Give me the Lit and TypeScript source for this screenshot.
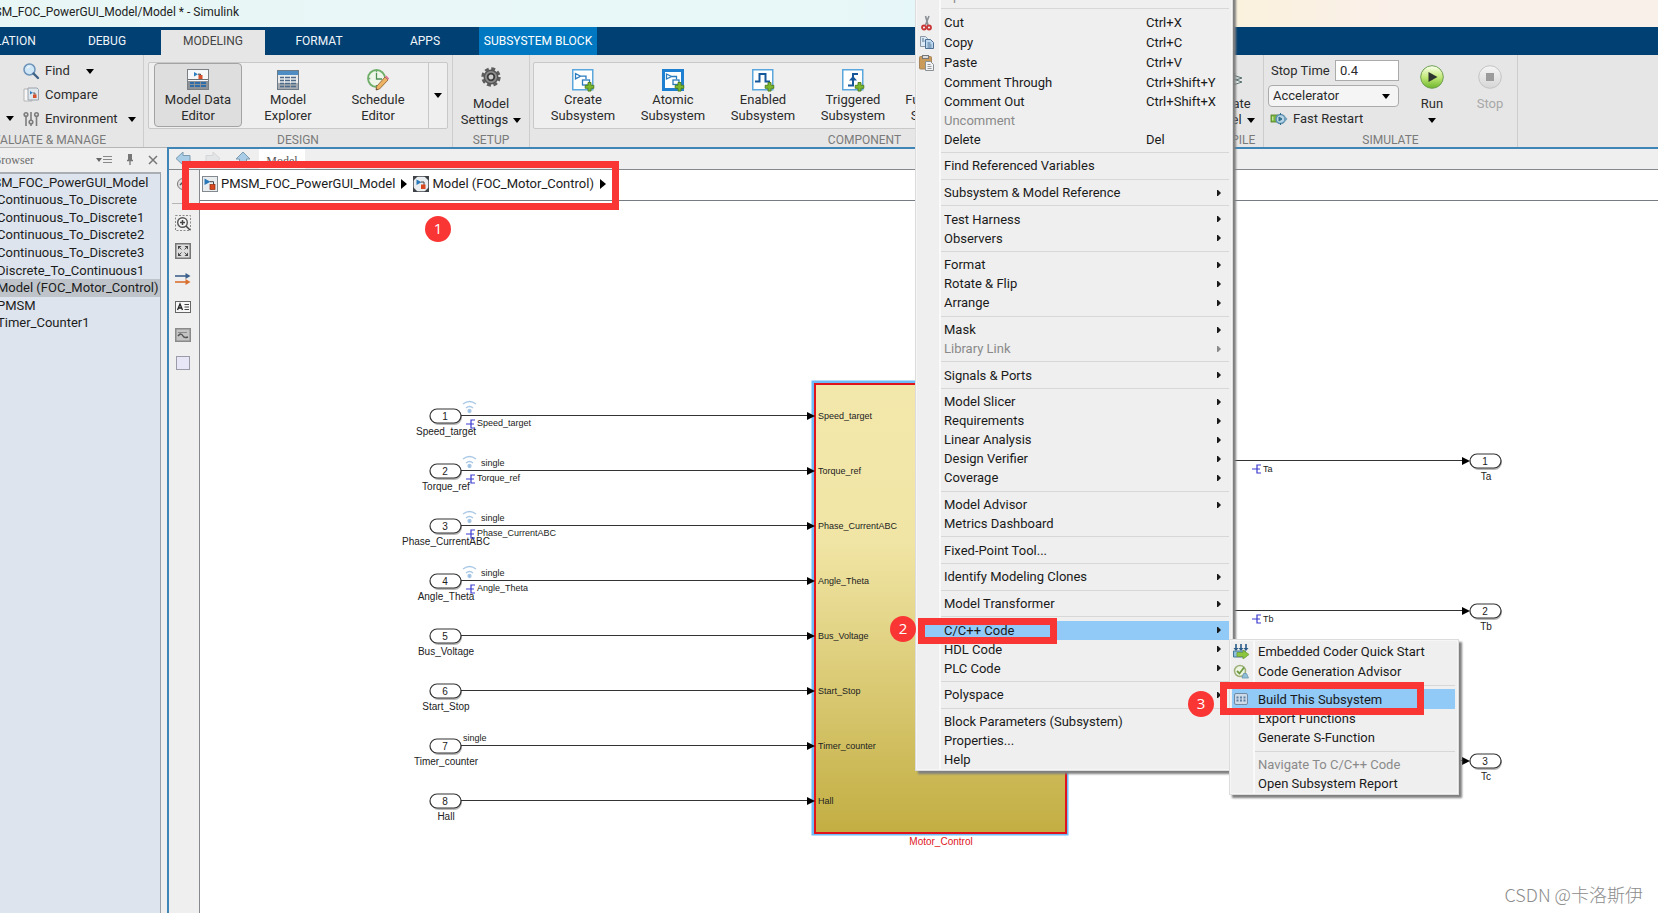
import { LitElement, html, svg, css, nothing, TemplateResult, SVGTemplateResult } from "lit";
import { customElement, state } from "lit/decorators.js";
import { classMap } from "lit/directives/class-map.js";

interface MenuEntry {
  label?: string;
  keys?: string;
  sub?: boolean;
  disabled?: boolean;
  active?: boolean;
  icon?: string;
  sep?: boolean;
}

const SEP: MenuEntry = { sep: true };

const CONTEXT_MENU: MenuEntry[] = [
  { label: "Open In New Window", disabled: true },
  SEP,
  { label: "Cut", keys: "Ctrl+X", icon: "cut" },
  { label: "Copy", keys: "Ctrl+C", icon: "copy" },
  { label: "Paste", keys: "Ctrl+V", icon: "paste" },
  { label: "Comment Through", keys: "Ctrl+Shift+Y" },
  { label: "Comment Out", keys: "Ctrl+Shift+X" },
  { label: "Uncomment", disabled: true },
  { label: "Delete", keys: "Del" },
  SEP,
  { label: "Find Referenced Variables" },
  SEP,
  { label: "Subsystem & Model Reference", sub: true },
  SEP,
  { label: "Test Harness", sub: true },
  { label: "Observers", sub: true },
  SEP,
  { label: "Format", sub: true },
  { label: "Rotate & Flip", sub: true },
  { label: "Arrange", sub: true },
  SEP,
  { label: "Mask", sub: true },
  { label: "Library Link", sub: true, disabled: true },
  SEP,
  { label: "Signals & Ports", sub: true },
  SEP,
  { label: "Model Slicer", sub: true },
  { label: "Requirements", sub: true },
  { label: "Linear Analysis", sub: true },
  { label: "Design Verifier", sub: true },
  { label: "Coverage", sub: true },
  SEP,
  { label: "Model Advisor", sub: true },
  { label: "Metrics Dashboard" },
  SEP,
  { label: "Fixed-Point Tool..." },
  SEP,
  { label: "Identify Modeling Clones", sub: true },
  SEP,
  { label: "Model Transformer", sub: true },
  SEP,
  { label: "C/C++ Code", sub: true, active: true },
  { label: "HDL Code", sub: true },
  { label: "PLC Code", sub: true },
  SEP,
  { label: "Polyspace", sub: true },
  SEP,
  { label: "Block Parameters (Subsystem)" },
  { label: "Properties..." },
  { label: "Help" },
];

const CODE_MENU: MenuEntry[] = [
  { label: "Embedded Coder Quick Start", icon: "coder" },
  { label: "Code Generation Advisor", icon: "advisor" },
  SEP,
  { label: "Build This Subsystem", icon: "build", active: true },
  { label: "Export Functions" },
  { label: "Generate S-Function" },
  SEP,
  { label: "Navigate To C/C++ Code", disabled: true },
  { label: "Open Subsystem Report" },
];

const plus = svg`<path d="M15 14.5h3v2.8h2.8v3H18v2.8h-3v-2.8h-2.8v-3H15z" transform="translate(1 -1)" fill="#7cb82f" stroke="#4c7a1c" stroke-width=".9"/>`;

const ICONS: Record<string, SVGTemplateResult> = {
  find: svg`<circle cx="6.5" cy="6.5" r="5.5" fill="#cfe6f7" stroke="#6d93b8" stroke-width="1.5"/><path d="M4 5.5a3 3 0 0 1 3-2" stroke="#fff" fill="none"/><path d="M10.5 10.5L15 15" stroke="#3f6187" stroke-width="2.4" stroke-linecap="round"/>`,
  compare: svg`<path d="M1 2h8v12H1z" fill="#f7f7f7" stroke="#b5b5b5"/><path d="M5 1h9l1.5 1.5V13H5z" fill="#dfe6ec" stroke="#9aa3ab"/><path d="M7 4l3 1.8L7 7.500z" fill="#2f7fc0"/><path d="M10 6h2v2" stroke="#444" fill="none" stroke-width=".8"/><rect x="10" y="7.500" width="3.500" height="3.500" fill="#d8502b"/>`,
  environment: svg`<g stroke="#7d7d7d" stroke-width="1.600" fill="#e6e6e6"><path d="M3 4v11M8 1v8M8 13v2M13.500 4v11"/><circle cx="3" cy="3.500" r="1.800"/><circle cx="8" cy="11" r="1.800"/><circle cx="13.500" cy="3.500" r="1.800"/></g>`,
  dataEditor: svg`<rect x=".5" y=".5" width="21" height="20" fill="#f5f7f9" stroke="#7b8085"/><path d="M1 12h20v8H1z" fill="#8c9297"/><path d="M1 10.500h20" stroke="#6b7075"/><path d="M7 3l4 2.200-4 2.300z" fill="#2f7fc0"/><path d="M11 5.200h2.500V7" stroke="#333" fill="none"/><rect x="11.500" y="6" width="4" height="4" fill="#d8502b"/><path d="M3 14h4m1 0h5m1 0h5M3 17h4m1 0h5m1 0h5" stroke="#2f6da8" stroke-width="2"/>`,
  explorer: svg`<rect x=".5" y="1.500" width="21" height="19" fill="#e8eaec" stroke="#6e7a86"/><path d="M1 2h20v4H1z" fill="#4e8cc4"/><path d="M1 14h20v6H1z" fill="#a5abb0"/><path d="M3 8.500h4m1 0h5m1 0h5M3 11.500h4m1 0h5m1 0h5M3 14.500h4m1 0h5m1 0h5M3 17.500h4m1 0h5m1 0h5" stroke="#4d6a88" stroke-width="1.500"/>`,
  schedule: svg`<circle cx="9.500" cy="9.500" r="8.500" fill="#eef6ea" stroke="#6fae68" stroke-width="1.800"/><path d="M9.500 4v6H15M9.500 2.200v1M9.500 16v1M2.200 9.500h1" stroke="#4f8f55" stroke-width="1.300" fill="none"/><path d="M18 8l3 3-8.500 9-3.500 1 .7-3.600z" fill="#edb264" stroke="#94683a" stroke-width=".9"/><path d="M18 7.800l3.200 3 1-1.400-2.800-3z" fill="#e0789a"/><path d="M9 21l.5-1.800 1.300 1.200z" fill="#444"/>`,
  gear: svg`<circle cx="10" cy="10" r="8.400" fill="none" stroke="#5d5d5d" stroke-width="2.600" stroke-dasharray="4 2.600"/><circle cx="10" cy="10" r="6.800" fill="#8b8b8b" stroke="#555" stroke-width="1.500"/><circle cx="10" cy="10" r="3.300" fill="#cfcfcf" stroke="#3d3d3d" stroke-width="1.800"/>`,
  create: svg`<rect x=".75" y=".75" width="20" height="20" fill="#fff" stroke="#5ba7dd" stroke-width="1.500"/><path d="M3.500 4.500l5 2.700-5 2.700zM8.500 7.200h5.500v3" fill="none" stroke="#2b7cbf" stroke-width="1.300"/><rect x="10.500" y="11" width="7" height="5" fill="#fff" stroke="#2b7cbf" stroke-width="1.300"/>${plus}`,
  atomic: svg`<rect x="1.500" y="1.500" width="19" height="19" fill="#fff" stroke="#1f80d2" stroke-width="3"/><path d="M4.500 5l5 2.500-5 2.500zM9.500 7.500h5v3" fill="none" stroke="#2b7cbf" stroke-width="1.300"/><rect x="11" y="11" width="6" height="4.500" fill="#fff" stroke="#2b7cbf" stroke-width="1.300"/>${plus}`,
  enabled: svg`<rect x=".75" y=".75" width="20" height="20" fill="#fff" stroke="#5ba7dd" stroke-width="1.500"/><path d="M3 12.500h4.500V5h6v7.500H18" fill="none" stroke="#17589b" stroke-width="2"/>${plus}`,
  triggered: svg`<rect x=".75" y=".75" width="20" height="20" fill="#fff" stroke="#5ba7dd" stroke-width="1.500"/><path d="M6 16.500h5V5h5" fill="none" stroke="#17589b" stroke-width="2"/><path d="M7 11.500l4-4.500 4 4.500z" fill="#17589b"/>${plus}`,
  update: svg`<path d="M5 12l9-3 9 3-9 3z" fill="#cfd8d8" stroke="#5a7370"/><path d="M5 16l9-3 9 3-9 3z" fill="#e8eded" stroke="#5a7370"/><path d="M9 2h5v5h3l-5.500 4L6 7h3z" fill="#6aa63b"/>`,
  restart: svg`<rect x="0" y="4" width="7" height="7" fill="#7cb73a" stroke="#4d7b25" stroke-width=".8"/><path d="M1.800 5.500v4" stroke="#e3f2cf"/><circle cx="9.500" cy="8" r="4.500" fill="#b5d3e4" stroke="#5a8fb0" stroke-width="1.500"/><path d="M8 6l3 2-3 2zM9.500 2v2M9.500 12v2" fill="#34708e" stroke="#34708e"/><path d="M13 4.500l3.500 3.500-3.500 3.500z" fill="#6f9fba"/>`,
  run: svg`<defs><linearGradient id="rg" x2="0" y2="1"><stop offset="0" stop-color="#fbfff0"/><stop offset=".5" stop-color="#c4ea7a"/><stop offset="1" stop-color="#6cb52a"/></linearGradient></defs><circle cx="12" cy="12" r="11.300" fill="url(#rg)" stroke="#6f9f52"/><path d="M8.500 7l9 5-9 5z" fill="#2e3430"/>`,
  stop: svg`<defs><linearGradient id="sg" x2="0" y2="1"><stop offset="0" stop-color="#f5f5f5"/><stop offset="1" stop-color="#d6d6d6"/></linearGradient></defs><circle cx="12" cy="12" r="11.300" fill="url(#sg)" stroke="#c4c4c4"/><rect x="8" y="8" width="8" height="8" fill="#9b9b9b"/>`,
  back: svg`<path d="M1 7.500L8 1v3.500h7v6H8V14z" fill="#a9cde6" stroke="#7d9bb0"/>`,
  forward: svg`<path d="M15 7.500L8 1v3.500H1v6h7V14z" fill="#e3e5e6" stroke="#d3d6d8"/>`,
  up: svg`<path d="M8 1l7 7h-3.500v6h-7V8H1z" fill="#a9cde6" stroke="#7d9bb0"/>`,
  model: svg`<rect x=".5" y=".5" width="15" height="15" fill="#e9edf0" stroke="#83898e"/><path d="M2.500 2.500l6 3.200-6 3.200z" fill="#2a77b8"/><path d="M8 5.700h3.500v3" fill="none" stroke="#444"/><rect x="8" y="8.500" width="5" height="5" fill="#d9481f" stroke="#8e2c10" stroke-width=".7"/>`,
  ref: svg`<rect x=".5" y=".5" width="15" height="15" fill="#e9edf0" stroke="#6a6f74"/><path d="M0 0h5L0 5zM16 0v5l-5-5zM0 16v-5l5 5zM16 16h-5l5-5z" fill="#3f4347"/><path d="M3.500 3.500l5 2.700-5 2.700z" fill="#2a77b8"/><path d="M8 6h3v3" fill="none" stroke="#444"/><rect x="8" y="8.500" width="4.500" height="4.500" fill="#d9481f"/>`,
  hide: svg`<circle cx="8" cy="8" r="5.500" fill="#e0e0e0" stroke="#777"/><path d="M5 9l3-3 3 3" stroke="#555" fill="none" stroke-width="1.500"/>`,
  zoomIn: svg`<rect x=".5" y=".5" width="15" height="15" fill="none" stroke="#8a8a8a" stroke-dasharray="2 1.500"/><circle cx="7.500" cy="7.500" r="4.800" fill="#f6f6f6" stroke="#555" stroke-width="1.400"/><path d="M5 7.500h5M7.500 5v5M11 11l4 4" stroke="#444" stroke-width="1.500"/>`,
  fit: svg`<rect x=".75" y=".75" width="14.500" height="14.500" fill="#dcdcdc" stroke="#777" stroke-width="1.500"/><path d="M3 3h3.500L3 6.500zM13 3H9.500L13 6.500zM3 13h3.500L3 9.500zM13 13H9.500L13 9.500z" fill="#444"/><path d="M4 4l2.500 2.500M12 4L9.500 6.500M4 12l2.500-2.500M12 12L9.500 9.500" stroke="#555"/>`,
  signals: svg`<path d="M0 5h12" stroke-width="1.600" stroke="#3d608c"/><path d="M10.500 2l5 3-5 3z" fill="#3d608c"/><path d="M0 11h12" stroke="#d9702f" stroke-width="1.600"/><path d="M10.500 8l5 3-5 3z" fill="#d9702f"/>`,
  note: svg`<rect x=".5" y="2.500" width="15" height="11" fill="#f7f7f7" stroke="#666"/><path d="M2.500 11L5 5l2.500 6M3.500 9h3" stroke="#222" fill="none" stroke-width="1.300"/><path d="M9.500 5.500H14M9.500 8H14M9.500 10.500H14" stroke="#444"/>`,
  image: svg`<rect x=".75" y="1.750" width="14.500" height="12.500" fill="#c4c4c4" stroke="#8a8a8a" stroke-width="1.500"/><path d="M3 5.500h9" stroke="#8a8a8a"/><path d="M3 9c2.500-3 4-2 5 0s2.500 2 5 1" fill="none" stroke="#555" stroke-width="1.500"/>`,
  area: svg`<rect x="1.500" y="1.500" width="13" height="13" fill="#e6e6f7" stroke="#9a9aa8"/>`,
  cut: svg`<path d="M10 1L6.500 10M6.500 1L9 10" stroke="#8a8f94" stroke-width="1.600"/><circle cx="5" cy="12.500" r="2" fill="none" stroke="#c93636" stroke-width="1.800"/><circle cx="10" cy="12.500" r="2" fill="none" stroke="#c93636" stroke-width="1.800"/>`,
  copy: svg`<path d="M1.500 1.500h5l2 2v8h-7z" fill="#dce9f4" stroke="#8a98a5"/><path d="M6.500 4.500h5l3 3v6h-8z" fill="#bcd7ef" stroke="#4c6f93"/><path d="M8.500 8h3M8.500 10h4M8.500 12h4M3 4h2M3 6h2.500" stroke="#4c6f93"/>`,
  paste: svg`<rect x=".5" y="1.500" width="12" height="12.500" rx="1" fill="#c99a58" stroke="#a8845a"/><rect x="3.500" y=".5" width="6" height="3" fill="#ddd" stroke="#777"/><path d="M6.500 6.500h5l3 3v6h-8z" fill="#f1f3f5" stroke="#8b9094"/><path d="M8.500 9.500h3M8.500 11.500h4M8.500 13.500h4" stroke="#999"/>`,
  coder: svg`<path d="M3 1v6M8 1v6M13 1v6" stroke="#2c5c88" stroke-width="1.600"/><path d="M.5 5h5L3 8zM5.500 5h5L8 8zM10.500 5h5L13 8z" fill="#2c5c88"/><path d="M.5 8h12v6H.5z" fill="#8fc0da" stroke="#3f7796"/><path d="M4 9.500h6V7l6 4.500-6 4.500v-2.500H4z" fill="#8cc63e" stroke="#6d9d3a" stroke-width=".8"/>`,
  advisor: svg`<circle cx="7" cy="8" r="5.500" fill="#eef5e2" stroke="#9db07a" stroke-width="1.500"/><path d="M4 8l2.500 2.500L11 4.500" stroke="#6e9a45" stroke-width="1.800" fill="none"/><path d="M9 15l1.500-4.500h3L15.500 15z" fill="#8fc0da" stroke="#6c93ae" stroke-width=".8"/>`,
  build: svg`<rect x="1.500" y="2.500" width="13" height="11" rx="1.500" fill="#cddae8" stroke="#7289a3"/><path d="M3.500 6.500h2m1.500 0h2m1.500 0h2M3.500 9.500h2m1.500 0h2m1.500 0h2" stroke="#5f7fa5" stroke-width="1.800"/>`,
  listMenu: svg`<path d="M0 4h6L3 8z" fill="#666"/><path d="M7 2.500h9M7 5.500h9M7 8.500h9" stroke="#888"/>`,
  pin: svg`<path d="M3 1h4v6H3z" fill="#777"/><path d="M2 7.500h6M5 8v4" stroke="#777" stroke-width="1.300"/>`,
  close: svg`<path d="M1 1l8 8M9 1L1 9" stroke="#777" stroke-width="1.500"/>`,
};

const icon = (name: string, w = 16, h = w) =>
  html`<svg class="icon" width=${w} height=${h} aria-hidden="true">${ICONS[name]}</svg>`;

const caret = html`<svg class="icon" width="8" height="5" aria-hidden="true"><path d="M0 0h8L4 5z" fill="#000" /></svg>`;

@customElement("popup-menu")
export class PopupMenu extends LitElement {
  static properties = { entries: { attribute: false } };
  entries: MenuEntry[] = [];

  static styles = css`
    :host {
      display: flex;
      flex-direction: column;
      box-sizing: border-box;
      padding: 1px 3px 1px 2px;
      background: linear-gradient(90deg, #efefef 23px, #f9f9f9 23px, #f9f9f9 25px, #efefef 25px);
      border: 1px solid #dcdcdc;
      outline: 1px solid #f6f6f6;
      outline-offset: -2px;
      box-shadow: 3px 3px 2px #808080;
      font: 13px/19px Roboto, "Open Sans", sans-serif;
      color: #1a1a1a;
    }
    .entry {
      display: grid;
      grid-template-columns: 26px 202px 1fr 12px;
      align-items: center;
      height: 19px;
      flex: none;
      padding: 0;
      border: 0;
      background: none;
      font: inherit;
      color: inherit;
      text-align: left;
      white-space: nowrap;
    }
    .entry.tall {
      height: 20px;
    }
    .entry.active {
      background: #91c9f7;
    }
    .entry:disabled {
      color: #8a8a8a;
    }
    .icon,
    .arrow {
      display: block;
    }
    .icon {
      margin-left: 1px;
    }
    .sep {
      flex: 1 0 7px;
      display: flex;
      align-items: center;
      padding-left: 23px;
    }
    .sep::before {
      content: "";
      flex: 1;
      height: 1px;
      background: #d7d7d7;
    }
  `;

  render() {
    return this.entries.map((e) =>
      e.sep
        ? html`<div class="sep" role="separator"></div>`
        : html`<button
            class=${classMap({ entry: true, active: !!e.active, tall: !!e.icon })}
            role="menuitem"
            ?disabled=${!!e.disabled}
          >
            <span>${e.icon ? icon(e.icon) : nothing}</span>
            <span>${e.label}</span>
            <span>${e.keys ?? nothing}</span>
            <span
              >${e.sub
                ? html`<svg class="arrow" width="4" height="6" aria-hidden="true">
                    <path d="M0 0h1l3 3-3 3H0z" fill="currentColor" />
                  </svg>`
                : nothing}</span
            >
          </button>`
    );
  }
}

interface Port {
  name: string;
  streamed?: boolean;
  typeX?: number;
}

const INPORTS: Port[] = [
  { name: "Speed_target", streamed: true },
  { name: "Torque_ref", streamed: true, typeX: 481 },
  { name: "Phase_CurrentABC", streamed: true, typeX: 481 },
  { name: "Angle_Theta", streamed: true, typeX: 481 },
  { name: "Bus_Voltage" },
  { name: "Start_Stop" },
  { name: "Timer_counter", typeX: 463 },
  { name: "Hall" },
];

@customElement("block-diagram")
export class BlockDiagram extends LitElement {
  static styles = css`
    :host {
      display: block;
      background: #fff;
    }
    svg {
      display: block;
      width: 100%;
      height: 100%;
      font-family: "Liberation Sans", Arial, sans-serif;
    }
    .name {
      font-size: 10px;
      text-anchor: middle;
      fill: #222;
    }
    .small {
      font-size: 9px;
      fill: #222;
    }
    .block-name {
      font-size: 10px;
      text-anchor: middle;
      fill: #e0141c;
    }
  `;

  private port(x: number, y: number, n: number, name: string) {
    return svg`
      <rect x=${x + 1} y=${y - 6} width="31" height="15" rx="7.5" fill="#000" opacity=".28" />
      <rect x=${x} y=${y - 7} width="31" height="14" rx="7" fill="#fff" stroke="#333" stroke-width="1.2" />
      <text class="name" x=${x + 15} y=${y + 4}>${n}</text>
      <text class="name" x=${x + 16} y=${y + 19}>${name}</text>`;
  }

  private fork(x: number, y: number) {
    return svg`<path d="M${x} ${y}h5M${x + 9} ${y - 4}h-4v8h4M${x + 5} ${y}h3" fill="none" stroke="#3a3ad0" stroke-width="1.2" />`;
  }

  private wire(x1: number, x2: number, y: number) {
    return svg`<path d="M${x1} ${y - 0.5}H${x2 - 6}" stroke="#333" /><path d="M${x2 - 7} ${y - 4}l8 4-8 4z" fill="#000" />`;
  }

  render() {
    return html`<svg role="img" aria-label="Model (FOC_Motor_Control) block diagram">
      <defs>
        <linearGradient id="fill" x1="0" y1="0" x2="0" y2="1">
          <stop offset="0" stop-color="#f3e8ab" />
          <stop offset="0.35" stop-color="#f1e5a5" />
          <stop offset="1" stop-color="#c2ae42" />
        </linearGradient>
      </defs>
      <g transform="translate(-200 -201)">
        <rect x="813" y="382" width="254" height="452" fill="none" stroke="#6cbcf8" stroke-width="3" />
        <rect x="815" y="384" width="251" height="449" fill="url(#fill)" stroke="#e0141a" stroke-width="2" />
        ${INPORTS.map((p, i) => {
          const y = 416 + i * 55;
          return svg`
            ${this.wire(461, 814, y)}
            ${this.port(430, y, i + 1, p.name)}
            <text class="small" x="818" y=${y + 3}>${p.name}</text>
            ${p.streamed
              ? svg`<g fill="none" stroke="#a9c8e6" stroke-width="1.3">
                    <path d="M463 ${y - 12}q6.500 -5 13 0M466 ${y - 8}q3.500 -3 7 0" />
                    <circle cx="469.500" cy=${y - 5} r="1.500" fill="#8fb9e0" />
                  </g>
                  ${this.fork(466, y + 8)}
                  <text class="small" x="477" y=${y + 10}>${p.name}</text>`
              : nothing}
            ${p.typeX ? svg`<text class="small" x=${p.typeX} y=${y - 5}>single</text>` : nothing}`;
        })}
        ${["Ta", "Tb", "Tc"].map((name, i) => {
          const y = 461 + i * 150;
          return svg`
            ${this.wire(1068, 1469, y)}
            ${this.port(1470, y, i + 1, name)}
            ${this.fork(1252, y + 8)}
            <text class="small" x="1263" y=${y + 11}>${name}</text>`;
        })}
        <text class="block-name" x="941" y="845">Motor_Control</text>
      </g>
    </svg>`;
  }
}

@customElement("app-root")
export class AppRoot extends LitElement {
  @state() private tab = "MODELING";

  static styles = css`
    :host {
      display: flex;
      flex-direction: column;
      position: relative;
      height: 100vh;
      overflow: hidden;
      background: #efefef;
      font: 13px/16px Roboto, "Open Sans", sans-serif;
      color: #2b2b2b;
    }
    button {
      padding: 0;
      border: 0;
      background: none;
      font: inherit;
      color: inherit;
      white-space: nowrap;
    }
    .icon {
      display: block;
      flex: none;
      overflow: visible;
    }
    .titlebar {
      flex: none;
      height: 27px;
      line-height: 24px;
      font-size: 12px;
      color: #222;
      background: linear-gradient(90deg, #e8f7f6 0%, #e8f7f7 50%, #e4f6fb 58%, #faf2dc 74%, #faf0ea 84%, #faf0ea 100%);
      display: flex;
      overflow: hidden;
    }
    .titlebar span {
      display: flex;
      justify-content: flex-end;
      width: 239px;
      white-space: nowrap;
    }
    .tabs {
      flex: none;
      display: flex;
      align-items: flex-end;
      gap: 2px;
      height: 28px;
      margin-left: -51px;
      background: #004073;
      font-size: 12px;
    }
    .tabs button {
      width: 104px;
      height: 28px;
      color: #f0f5fa;
    }
    .tabs .current {
      height: 25px;
      padding-bottom: 3px;
      background: #e6e6e6;
      color: #444;
    }
    .tabs .context {
      width: 118px;
      background: #0078c1;
      color: #fff;
    }
    .strip {
      flex: none;
      display: flex;
      height: 92px;
      background: #e6e6e6;
    }
    .section {
      flex: none;
      display: flex;
      flex-direction: column;
      box-sizing: border-box;
      padding-top: 7px;
      border-right: 1px solid #cdcdcd;
    }
    .section h2 {
      margin: 0;
      height: 15px;
      font: 12px/16px Roboto, "Open Sans", sans-serif;
      color: #7a7a7a;
      text-align: center;
      white-space: nowrap;
    }
    .body {
      flex: 1;
      display: flex;
    }
    .evaluate {
      width: 144px;
      padding-top: 4px;
    }
    .evaluate .body {
      justify-content: flex-end;
      padding-right: 8px;
      gap: 9px;
    }
    .evaluate h2 {
      display: flex;
      justify-content: flex-end;
      padding-right: 37px;
    }
    .stack {
      display: flex;
      flex-direction: column;
      width: 112px;
    }
    .stack button {
      display: flex;
      align-items: center;
      justify-content: flex-start;
      gap: 6px;
      height: 24px;
    }
    .stack button .icon:last-child {
      margin-left: 4px;
    }
    .stack .spread .icon:last-child {
      margin-left: 10px;
    }
    .cut-button {
      display: flex;
      align-items: flex-end;
      padding-bottom: 11px;
    }
    .design {
      width: 309px;
      padding-left: 4px;
      padding-right: 4px;
    }
    .gallery {
      flex: 1;
      display: flex;
      gap: 2px;
      box-sizing: border-box;
      height: 67px;
      padding-left: 5px;
      background: #efefef;
      border: 1px solid #c8c8c8;
      border-radius: 2px;
    }
    .tool {
      flex: none;
      display: flex;
      flex-direction: column;
      align-items: center;
      gap: 1px;
      box-sizing: border-box;
      width: 88px;
      height: 64px;
      padding-top: 5px;
      border: 1px solid transparent;
      border-radius: 4px;
      text-align: center;
      white-space: pre-line;
    }
    .tool.pressed {
      background: #dedede;
      border-color: #a3a3a3;
    }
    .gallery .more {
      display: grid;
      place-items: center;
      flex: 1;
      border-left: 1px solid #c8c8c8;
      margin-left: 4px;
    }
    .setup {
      width: 77px;
    }
    .big {
      display: flex;
      flex-direction: column;
      align-items: center;
      flex: 1;
      padding-top: 3px;
    }
    .big .glyph {
      display: grid;
      place-items: center;
      height: 24px;
      margin-bottom: 7px;
    }
    .big .row {
      display: flex;
      align-items: center;
      gap: 5px;
      height: 16px;
    }
    .big:disabled {
      color: #a8a8a8;
    }
    .component {
      width: 667px;
      padding-left: 3px;
    }
    .compile {
      width: 67px;
    }
    .simulate {
      width: 254px;
    }
    .simulate .body {
      margin-top: -2px;
    }
    .form {
      display: flex;
      flex-direction: column;
      gap: 4px;
      width: 131px;
      padding-left: 4px;
      margin-right: 4px;
      flex: none;
    }
    .form .row {
      display: flex;
      align-items: center;
      justify-content: space-between;
      padding-left: 3px;
      height: 21px;
      white-space: nowrap;
    }
    .form .row input {
      box-sizing: border-box;
      width: 64px;
      height: 21px;
      padding: 0 4px;
      border: 1px solid #ababab;
      background: #fff;
      font: inherit;
      color: inherit;
    }
    .form .select {
      display: grid;
      align-items: center;
    }
    .form select,
    .form .select .icon {
      grid-area: 1 / 1;
    }
    .form .select .icon {
      justify-self: end;
      margin-right: 9px;
      pointer-events: none;
    }
    .form select {
      appearance: none;
      box-sizing: border-box;
      height: 22px;
      padding: 0 4px;
      border: 1px solid #ababab;
      border-radius: 4px;
      background: #f5f5f5;
      font: inherit;
      color: inherit;
    }
    .form button {
      display: flex;
      align-items: center;
      gap: 6px;
      padding-left: 3px;
    }
    .simulate .big {
      flex: none;
      width: 58px;
      padding-top: 5px;
    }
    .workspace {
      flex: 1;
      display: flex;
      min-height: 0;
    }
    .browser {
      flex: none;
      display: flex;
      flex-direction: column;
      box-sizing: border-box;
      width: 167px;
      border-top: 1px solid #b5b5b5;
      padding-right: 6px;
    }
    .browser header {
      display: flex;
      align-items: center;
      height: 24px;
      font: 12px/16px "Liberation Serif", serif;
      color: #6b6b6b;
    }
    .browser header .title {
      display: flex;
      justify-content: flex-end;
      width: 34px;
      margin-right: auto;
      white-space: nowrap;
    }
    .browser header .tools {
      display: flex;
      align-items: center;
      gap: 13px;
      padding-right: 3px;
    }
    .tree {
      flex: 1;
      margin: 0;
      background: #dde4ed;
      border-top: 2px solid #a9aeb5;
      border-right: 1px solid #9aa0a8;
      color: #1c1c1c;
    }
    .tree ul {
      display: grid;
      grid-auto-rows: 1fr;
      height: 158px;
      margin: 0;
      padding: 0;
      list-style: none;
    }
    .tree li {
      display: flex;
      align-items: center;
      overflow: hidden;
      white-space: nowrap;
    }
    .tree li.selected {
      background: #bfc4ca;
    }
    .tree .clip {
      margin-left: -3px;
    }
    .tree .root {
      margin-left: -26px;
    }
    .editor {
      flex: 1;
      display: flex;
      flex-direction: column;
      min-width: 0;
      border-top: 2px solid #3f86b6;
      border-left: 2px solid #3f86b6;
    }
    .doc-tabs {
      flex: none;
      display: flex;
      align-items: center;
      height: 20px;
      padding-left: 6px;
      gap: 14px;
      border-bottom: 1px solid #85888d;
    }
    .doc-tabs .doc {
      align-self: stretch;
      box-sizing: border-box;
      width: 46px;
      margin-left: -6px;
      padding-top: 4px;
      background: #fff;
      font: 12px/14px "Liberation Serif", serif;
      color: #555;
    }
    .stage {
      flex: 1;
      display: flex;
      min-height: 0;
    }
    .palette {
      flex: none;
      display: flex;
      flex-direction: column;
      align-items: center;
      gap: 12px;
      box-sizing: border-box;
      width: 31px;
      padding: 6px 2px 0 0;
      border-right: 1px solid #85888d;
    }
    .palette hr {
      width: 22px;
      height: 1px;
      margin: -1px 0;
      border: 0;
      background: #b5b5b5;
    }
    .main {
      flex: 1;
      display: flex;
      flex-direction: column;
      min-width: 0;
    }
    .crumbs {
      flex: none;
      display: flex;
      align-items: center;
      gap: 2px;
      box-sizing: border-box;
      height: 31px;
      padding: 0 2px 2px;
      background: #fff;
      border-bottom: 1px solid #777b82;
      color: #1c1c1c;
    }
    .crumbs a {
      display: flex;
      align-items: center;
      gap: 3px;
      color: inherit;
      text-decoration: none;
      white-space: nowrap;
    }
    .crumbs .next {
      margin: 0 4px;
    }
    block-diagram {
      flex: 1;
      min-height: 0;
    }
    .context-menu,
    .code-menu,
    .frame,
    .badge,
    .watermark {
      position: absolute;
    }
    .context-menu {
      left: 915px;
      top: -16px;
      width: 318px;
      height: 787px;
    }
    .code-menu {
      left: 1229px;
      top: 639px;
      width: 230px;
      height: 156px;
    }
    .frame {
      box-sizing: border-box;
      border: 7px solid #fa3635;
    }
    .frame.path {
      left: 182px;
      top: 161px;
      width: 437px;
      height: 49px;
    }
    .frame.code {
      left: 918px;
      top: 618px;
      width: 139px;
      height: 26px;
    }
    .frame.build {
      left: 1220px;
      top: 682px;
      width: 204px;
      height: 33px;
    }
    .badge {
      width: 26px;
      height: 26px;
      border-radius: 13px;
      background: #fa3635;
      color: #fff;
      font: 15px/24px "Open Sans", "Noto Sans", sans-serif;
      text-align: center;
    }
    .badge.one {
      left: 425px;
      top: 216px;
    }
    .badge.two {
      left: 890px;
      top: 616px;
    }
    .badge.three {
      left: 1188px;
      top: 691px;
    }
    .watermark {
      right: 15px;
      bottom: 7px;
      font: 300 18px/24px "Noto Sans CJK SC", sans-serif;
      color: #8c8c8c;
    }
  `;

  private tool(name: string, label: string, pressed = false): TemplateResult {
    return html`<button class=${classMap({ tool: true, pressed })}>${icon(name, 22)}<span>${label}</span></button>`;
  }

  render() {
    const tabs = ["SIMULATION", "DEBUG", "MODELING", "FORMAT", "APPS", "SUBSYSTEM BLOCK"];
    return html`
      <div class="titlebar"><span>PMSM_FOC_PowerGUI_Model/Model * - Simulink</span></div>
      <nav class="tabs">
        ${tabs.map(
          (t) =>
            html`<button
              class=${classMap({ current: t === this.tab, context: t === "SUBSYSTEM BLOCK" })}
              @click=${() => (this.tab = t)}
            >
              ${t}
            </button>`
        )}
      </nav>
      <div class="strip">
        <section class="section evaluate">
          <div class="body">
            <button class="cut-button" aria-label="More">${caret}</button>
            <div class="stack">
              <button class="spread">${icon("find")}Find${caret}</button>
              <button>${icon("compare")}<span>Compare</span></button>
              <button>${icon("environment")}Environment${caret}</button>
            </div>
          </div>
          <h2>EVALUATE &amp; MANAGE</h2>
        </section>
        <section class="section design">
          <div class="body">
            <div class="gallery">
              ${this.tool("dataEditor", "Model Data\nEditor", true)} ${this.tool("explorer", "Model\nExplorer")}
              ${this.tool("schedule", "Schedule\nEditor")}
              <button class="more" aria-label="More design tools">${caret}</button>
            </div>
          </div>
          <h2>DESIGN</h2>
        </section>
        <section class="section setup">
          <div class="body">
            <button class="big">
              <span class="glyph">${icon("gear", 20)}</span>
              <span class="row">Model</span>
              <span class="row">Settings ${caret}</span>
            </button>
          </div>
          <h2>SETUP</h2>
        </section>
        <section class="section component">
          <div class="body">
            <div class="gallery">
              ${this.tool("create", "Create\nSubsystem")} ${this.tool("atomic", "Atomic\nSubsystem")}
              ${this.tool("enabled", "Enabled\nSubsystem")} ${this.tool("triggered", "Triggered\nSubsystem")}
              ${this.tool("enabled", "Function-Call\nSubsystem")}
            </div>
          </div>
          <h2>COMPONENT</h2>
        </section>
        <section class="section compile">
          <div class="body">
            <button class="big">
              <span class="glyph">${icon("update", 22)}</span>
              <span class="row">Update</span>
              <span class="row">Model ${caret}</span>
            </button>
          </div>
          <h2>COMPILE</h2>
        </section>
        <section class="section simulate">
          <div class="body">
            <div class="form">
              <div class="row">
                <label for="stop-time">Stop Time</label>
                <input id="stop-time" type="text" value="0.4" />
              </div>
              <div class="select">
                <select aria-label="Simulation mode">
                  <option>Accelerator</option>
                  <option>Normal</option>
                </select>
                ${caret}
              </div>
              <button>${icon("restart")}Fast Restart</button>
            </div>
            <button class="big">
              <span class="glyph">${icon("run", 24)}</span>
              <span class="row">Run</span>
              <span class="row">${caret}</span>
            </button>
            <button class="big" disabled>
              <span class="glyph">${icon("stop", 24)}</span>
              <span class="row">Stop</span>
            </button>
          </div>
          <h2>SIMULATE</h2>
        </section>
      </div>
      <div class="workspace">
        <aside class="browser">
          <header>
            <span class="title">Model Browser</span>
            <span class="tools">${icon("listMenu", 16, 12)}${icon("pin", 10, 14)}${icon("close", 10)}</span>
          </header>
          <div class="tree">
            <ul>
              <li><span class="root">PMSM_FOC_PowerGUI_Model</span></li>
              <li><span class="clip">Continuous_To_Discrete</span></li>
              <li><span class="clip">Continuous_To_Discrete1</span></li>
              <li><span class="clip">Continuous_To_Discrete2</span></li>
              <li><span class="clip">Continuous_To_Discrete3</span></li>
              <li><span class="clip">Discrete_To_Continuous1</span></li>
              <li class="selected"><span class="clip">Model (FOC_Motor_Control)</span></li>
              <li><span class="clip">PMSM</span></li>
              <li><span class="clip">Timer_Counter1</span></li>
            </ul>
          </div>
        </aside>
        <main class="editor">
          <div class="doc-tabs">
            ${icon("back")} ${icon("forward")} ${icon("up")}
            <button class="doc">Model</button>
          </div>
          <div class="stage">
            <div class="palette">
              ${icon("hide")}
              <hr />
              ${["zoomIn", "fit", "signals", "note", "image", "area"].map((n) => icon(n))}
            </div>
            <div class="main">
              <nav class="crumbs">
                <a href="#root">${icon("model")}PMSM_FOC_PowerGUI_Model</a>
                <svg class="icon next" width="6" height="10"><path d="M0 0l6 5-6 5z" /></svg>
                <a href="#model">${icon("ref")}Model (FOC_Motor_Control)</a>
                <svg class="icon next" width="6" height="10"><path d="M0 0l6 5-6 5z" /></svg>
              </nav>
              <block-diagram></block-diagram>
            </div>
          </div>
        </main>
      </div>
      <popup-menu class="context-menu" role="menu" .entries=${CONTEXT_MENU}></popup-menu>
      <popup-menu class="code-menu" role="menu" .entries=${CODE_MENU}></popup-menu>
      <div class="frame path"></div>
      <div class="frame code"></div>
      <div class="frame build"></div>
      <div class="badge one">1</div>
      <div class="badge two">2</div>
      <div class="badge three">3</div>
      <div class="watermark">CSDN @卡洛斯伊</div>
    `;
  }
}
